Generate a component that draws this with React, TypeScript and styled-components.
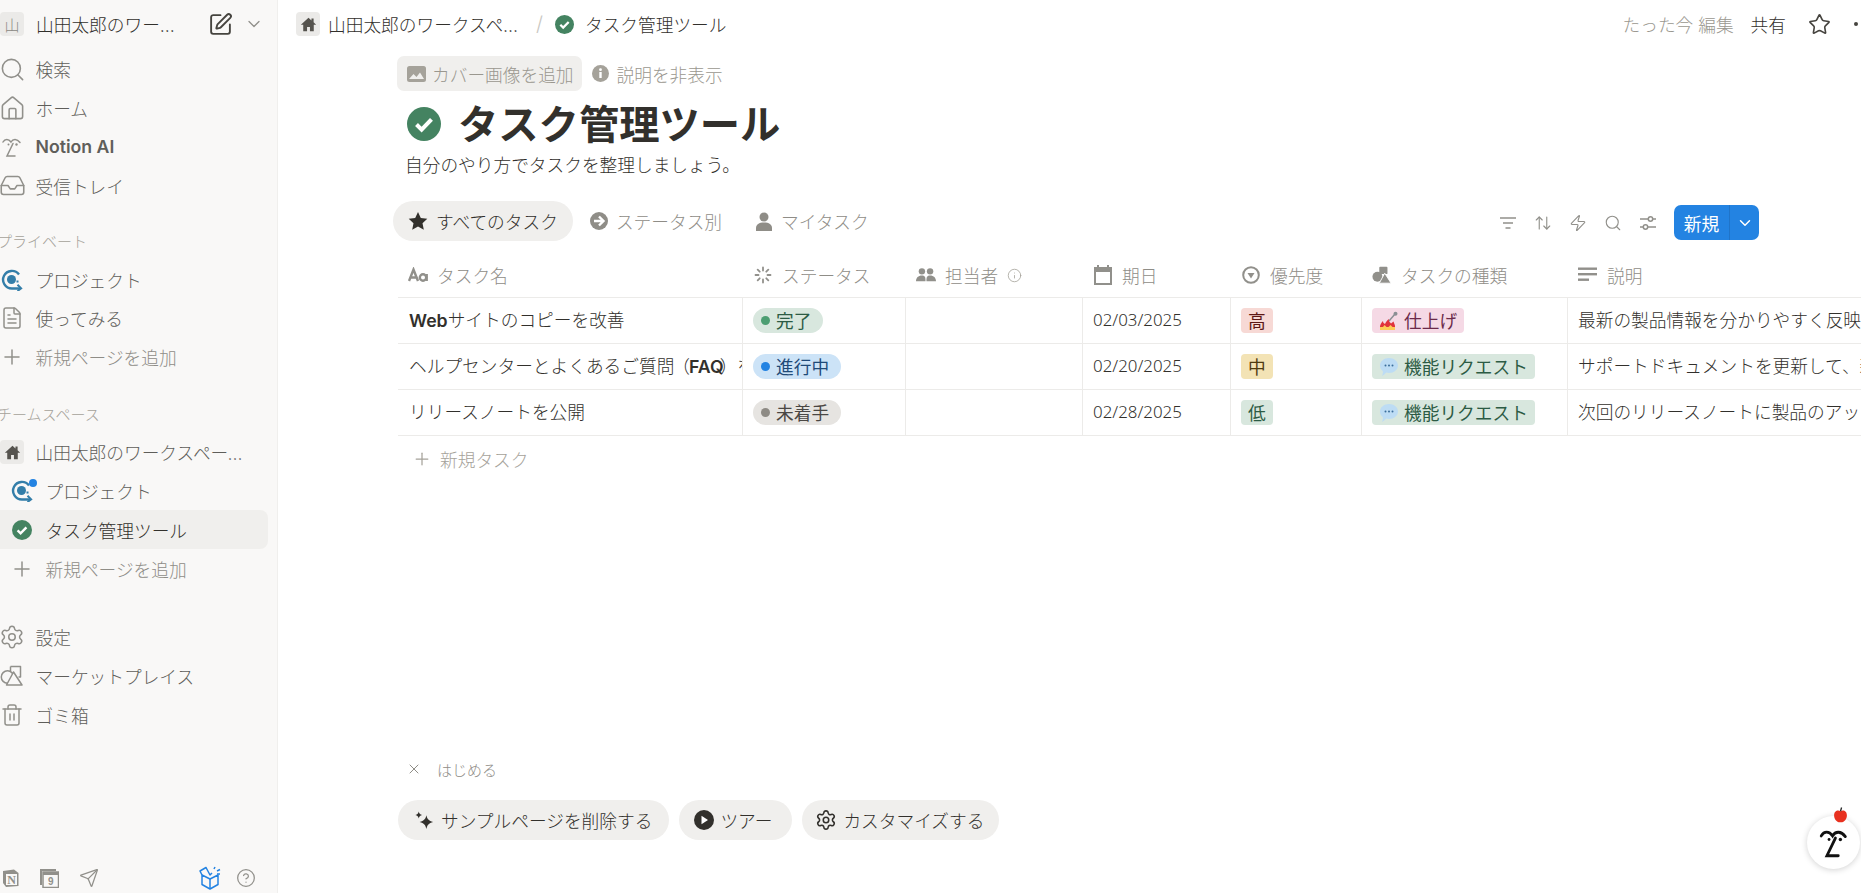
import React from "react";
import styled, { createGlobalStyle } from "styled-components";
import { Search, House, Inbox, FileText, Plus, Settings, Trash2, SquarePen, ChevronDown, Star, X, Info, CircleHelp, Send, ArrowUpDown, Zap } from "lucide-react";

const Global = createGlobalStyle`
  html, body { margin: 0; padding: 0; background: #fff; }
  body { font-family: "Inter", "Noto Sans CJK JP", "Noto Sans", sans-serif; font-size: 17.7px; font-weight: 300; color: #32302c; }
`;

const Page = styled.div`display: flex; width: 1861px; height: 893px; overflow: hidden;`;
const Sidebar = styled.aside`
  width: 277px; flex: none; height: 893px; background: #f9f8f7; border-right: 1px solid #f0efed;
  display: flex; flex-direction: column; overflow: hidden;
`;
const WorkspaceHead = styled.div`height: 50px; flex: none; display: flex; align-items: center;`;
const WsAvatar = styled.div`
  width: 24px; height: 24px; border-radius: 4px; background: #ebeae8; color: #8a8883; font-size: 15px;
  display: flex; align-items: center; justify-content: center; flex: none; margin-top: -2px;
`;
const WsName = styled.div`
  width: 141px; margin-left: 12px; margin-top: -2px; white-space: nowrap; overflow: hidden; text-overflow: ellipsis; color: #32302c; flex: none;
`;
const WsActions = styled.div`display: flex; align-items: center; gap: 11px; margin-left: 31px; margin-top: -2px; color: #32302c;`;
const NavRow = styled.div<{ $indent?: boolean; $active?: boolean; $muted?: boolean; $bold?: boolean }>`
  height: 38.75px; flex: none; display: flex; align-items: center; box-sizing: border-box;
  padding-left: ${(p) => (p.$indent ? "10px" : "0")}; width: ${(p) => (p.$active ? "268px" : "100%")};
  border-radius: 0 8px 8px 0;
  background: ${(p) => (p.$active ? "#f0efed" : "transparent")};
  color: ${(p) => (p.$active ? "#32302c" : p.$muted ? "#8f8d87" : "#5f5e5a")};
  font-weight: ${(p) => (p.$bold ? 600 : 300)};
`;
const NavIcon = styled.span`
  width: 24px; height: 24px; flex: none; display: flex; align-items: center; justify-content: center; color: #91908b; position: relative;
  & > svg { flex: none; }
`;
const NavText = styled.span`margin-left: 11.5px; white-space: nowrap; overflow: hidden; text-overflow: ellipsis;`;
const NavTextClamped = styled(NavText)`width: 208px; flex: none;`;
const SectionLabel = styled.div`
  height: 38.75px; flex: none; display: flex; align-items: center; margin-left: -3px; font-size: 15px; color: #a5a29a; white-space: nowrap;
`;
const SectionGap = styled.div<{ $h: number }>`height: ${(p) => p.$h}px; flex: none;`;
const HomeBox = styled.span`
  width: 24px; height: 24px; border-radius: 4px; background: #ebeae8; display: flex; align-items: center; justify-content: center; color: #55534e; flex: none;
`;
const BlueDot = styled.span`
  position: absolute; right: -3px; top: 0px; width: 8px; height: 8px; border-radius: 50%; background: #2383e2;
`;
const SideFoot = styled.div`margin-top: auto; height: 30px; display: flex; align-items: center; padding-left: 2px;`;
const FootGroup = styled.div`display: flex; align-items: center; gap: 20px; color: #91908b;`;
const FootRight = styled.div`display: flex; align-items: center; gap: 15px; margin-left: auto; margin-right: 21px; color: #91908b;`;

const Main = styled.main`flex: 1; min-width: 0; height: 893px; display: flex; flex-direction: column; overflow: hidden;`;
const TopBar = styled.header`height: 48px; flex: none; display: flex; align-items: center; padding-left: 18px;`;
const CrumbText = styled.span`white-space: nowrap; color: #32302c;`;
const CrumbName = styled(CrumbText)`width: 191px; margin-left: 8px; overflow: hidden; text-overflow: ellipsis; flex: none;`;
const CrumbLeaf = styled(CrumbText)`margin-left: 11px;`;
const Slash = styled.span`color: #c9c7c2; margin: 0 12px 0 17px; font-size: 20px; font-weight: 300;`;
const TopRight = styled.div`margin-left: auto; display: flex; align-items: center; flex: none;`;
const Edited = styled.span`color: #9a978f; white-space: nowrap; margin-right: 17px;`;
const Share = styled.span`color: #32302c; margin-right: 22px;`;
const StarBtn = styled.span`display: flex; color: #46443f; margin-right: 19px;`;

const Content = styled.div`flex: 1; display: flex; flex-direction: column; padding-left: 119px; min-height: 0;`;
const HintRow = styled.div`display: flex; align-items: center; margin-top: 8px; height: 35px; flex: none; color: #9a978f;`;
const HintButton = styled.div<{ $bg?: boolean }>`
  height: 35px; display: flex; align-items: center; gap: ${(p) => (p.$bg ? "6px" : "8px")}; padding: 0 8px 0 ${(p) => (p.$bg ? "10px" : "0")}; border-radius: 7px;
  background: ${(p) => (p.$bg ? "#f0efed" : "transparent")}; white-space: nowrap; margin-right: 10px; box-sizing: border-box;
`;
const TitleRow = styled.div`display: flex; align-items: center; height: 48px; margin-top: 9px; padding-left: 10px; flex: none;`;
const Title = styled.h1`margin: 0 0 0 17px; padding-top: 1px; font-size: 40.3px; font-weight: 700; line-height: 48px; color: #32302c; white-space: nowrap;`;
const Subtitle = styled.div`margin: 5px 0 0 8px; height: 26px; line-height: 26px; color: #32302c; flex: none; white-space: nowrap;`;
const ViewBar = styled.div`display: flex; align-items: center; margin: 22px 102px 0 -4px; height: 40px; flex: none;`;
const Tab = styled.div<{ $active?: boolean }>`
  height: 40px; display: flex; align-items: center; gap: 8px; padding: 0 ${(p) => (p.$active ? "15px" : "13px")} 0 15px; border-radius: 20px; white-space: nowrap; box-sizing: border-box;
  background: ${(p) => (p.$active ? "#f0efed" : "transparent")}; color: ${(p) => (p.$active ? "#32302c" : "#8f8d87")};
  margin-right: ${(p) => (p.$active ? "2px" : "5px")};
`;
const ViewTools = styled.div`margin-left: auto; margin-top: 3px; display: flex; align-items: center; gap: 17px; color: #91908b;`;
const NewButton = styled.div`
  display: flex; height: 35px; border-radius: 7px; overflow: hidden; background: #2383e2; color: #fff; flex: none; font-weight: 400;
`;
const NewLabel = styled.span`width: 55px; display: flex; align-items: center; justify-content: center; border-right: 1px solid #1f74c9;`;
const NewCaret = styled.span`width: 29px; display: flex; align-items: center; justify-content: center;`;

const Table = styled.div`margin: 12px 0 0 1px; flex: none;`;
const COLS = "345px 163px 177px 148px 131px 206px 1fr";
const HeadRow = styled.div`display: grid; grid-template-columns: ${COLS}; height: 45px; border-bottom: 1px solid #ecebe9; box-sizing: border-box; color: #8f8d87;`;
const HeadCell = styled.div`display: flex; align-items: center; gap: 9px; padding-left: 10px; white-space: nowrap; overflow: hidden;`;
const HeadIcon = styled.span`display: flex; width: 20px; flex: none; justify-content: center; color: #91908b;`;
const BodyRow = styled.div`display: grid; grid-template-columns: ${COLS}; height: 46px; border-bottom: 1px solid #ecebe9; box-sizing: border-box;`;
const Cell = styled.div<{ $last?: boolean }>`
  display: flex; align-items: center; padding: 0 0 3px 10px; white-space: nowrap; overflow: hidden; color: #32302c;
  border-right: ${(p) => (p.$last ? "none" : "1px solid #ecebe9")}; box-sizing: border-box; min-width: 0;
`;
const NameCell = styled(Cell)`padding-left: 11px;`;
const NameText = styled.span`white-space: nowrap;`;
const Latin = styled.span`font-weight: 600;`;
const Paren = styled.span`margin-left: -2px;`;
const FaqLatin = styled(Latin)`margin: 0 -4px 0 -1px;`;
const DateText = styled.span`font-family: "Noto Sans", sans-serif; font-size: 16.9px; font-weight: 300;`;
const Pill = styled.span<{ $bg: string; $fg: string; $round?: boolean }>`
  display: inline-flex; align-items: center; gap: ${(p) => (p.$round ? "6px" : "5px")}; height: 25px; padding: ${(p) => (p.$round ? "0 12px 2px 8px" : "0 7px 2px")}; box-sizing: border-box; margin-top: 3px;
  background: ${(p) => p.$bg}; color: ${(p) => p.$fg}; border-radius: ${(p) => (p.$round ? "13px" : "4px")}; flex: none; white-space: nowrap; font-weight: 400;
`;
const Dot = styled.span<{ $c: string }>`width: 9px; height: 9px; border-radius: 50%; background: ${(p) => p.$c}; flex: none; margin-top: 2px;`;
const NewRow = styled.div`display: flex; align-items: center; gap: 8px; height: 46px; padding-left: 14px; color: #a5a29a;`;

const Starter = styled.div`margin-top: auto; padding-bottom: 53px; flex: none;`;
const StarterHead = styled.div`display: flex; align-items: center; gap: 15px; padding-left: 9px; font-size: 15px; color: #8f8d87; height: 20px; margin-bottom: 21px;`;
const StarterRow = styled.div`display: flex; gap: 10px; margin-left: 1px;`;
const StarterPill = styled.div<{ $l?: number; $r?: number }>`
  height: 40px; border-radius: 20px; background: #f0efed; display: flex; align-items: center; gap: 6px; padding: 0 ${(p) => p.$r ?? 17}px 0 ${(p) => p.$l ?? 15}px; color: #32302c; white-space: nowrap; box-sizing: border-box;
`;
const Floating = styled.div`
  position: absolute; left: 1807px; top: 816px; width: 53px; height: 53px; border-radius: 50%; background: #fff;
  box-shadow: 0 1px 6px rgba(0,0,0,.18); display: flex; align-items: center; justify-content: center;
`;
const Apple = styled.svg`position: absolute; left: 26px; top: -9px;`;
const Root = styled.div`position: relative; width: 1861px; height: 893px;`;

const CheckBadge = ({ s = 20 }: { s?: number }) => (
  <svg width={s} height={s} viewBox="0 0 20 20" style={{ flex: "none" }}>
    <circle cx="10" cy="10" r="10" fill="#448361" />
    <path d="M5.6 10.3l3 3 5.8-6" fill="none" stroke="#fff" strokeWidth="2.4" />
  </svg>
);
const HomeSolid = ({ s = 17, c = "currentColor" }: { s?: number; c?: string }) => (
  <svg width={s} height={s} viewBox="0 0 20 20"><path fill={c} d="M10 2L1 10.2h2.8V18h4.5v-5.2h3.4V18h4.5v-7.8H19l-3-2.8V3h-2.5v2.2z" /></svg>
);
const ProjectIcon = () => (
  <svg width="22" height="22" viewBox="0 0 22 22" fill="none">
    <path d="M18 5.500A8.800 8.800 0 1 0 11 19.500h8" stroke="#337ea9" strokeWidth="2.400" />
    <path d="M16.500 15.800l3.600 3.600-3.600 2.600" stroke="#337ea9" strokeWidth="2" />
    <circle cx="10.500" cy="10.500" r="4.500" fill="#337ea9" />
    <path d="M15.500 12.500h4" stroke="#337ea9" strokeWidth="2" strokeDasharray="2 2" />
  </svg>
);
const Face = ({ s = 24, c = "#91908b", w = 1.5 }: { s?: number; c?: string; w?: number }) => (
  <svg width={s} height={s} viewBox="0 0 24 24" fill="none" stroke={c} strokeWidth={w} strokeLinecap="round">
    <path d="M3 7c2-3.500 5.500-3.500 8 0 2-3.500 6-3.500 9 .5" />
    <path d="M13 8.500L7 21h8" />
    <circle cx="8.500" cy="9.500" r="1" fill={c} stroke="none" />
    <circle cx="16.500" cy="9.500" r="1.200" fill={c} stroke="none" />
  </svg>
);
const ShapesOutline = () => (
  <svg width="24" height="24" viewBox="0 0 24 24" fill="none" stroke="#91908b" strokeWidth="1.500" strokeLinejoin="round">
    <circle cx="7.500" cy="13" r="6.200" />
    <path d="M10.500 2.500h10v10.500h-2" />
    <path d="M13.500 8l8.500 13H6.500z" fill="#f9f8f7" />
    <path d="M10.500 2.500v5" />
  </svg>
);
const Spinner = () => (
  <svg width="18" height="18" viewBox="0 0 18 18" stroke="#91908b" strokeWidth="1.800" strokeLinecap="round">
    <path d="M9 1.500v3M9 13.500v3M1.500 9h3M13.500 9h3M3.700 3.700l2 2M12.300 12.300l2 2M3.700 14.300l2-2M12.300 5.700l2-2" />
  </svg>
);
const AaIcon = () => (
  <svg width="20" height="16" viewBox="0 0 20 16" fill="none" stroke="#91908b" strokeWidth="2.400">
    <path d="M1 14L5.500 2.500 10 14M2.500 10.500h6" />
    <circle cx="15" cy="10.500" r="3.200" /><path d="M18.700 7v7" />
  </svg>
);
const People = () => (
  <svg width="22" height="16" viewBox="0 0 22 16" fill="#91908b">
    <circle cx="6.500" cy="4" r="3.500" /><circle cx="15.500" cy="4" r="3.500" />
    <path d="M0 15c0-4 2.500-6.500 6.500-6.500S10.500 11 10.500 15zM11.500 15c0-4 0-6.500 4-6.500S22 11 22 15z" />
  </svg>
);
const Calendar = () => (
  <svg width="18" height="20" viewBox="0 0 18 20"><path fill="#91908b" fillRule="evenodd" d="M3 0h2v2h8V0h2v2h3v18H0V2h3zM2 7v11h14V7z" /></svg>
);
const PriorityIcon = () => (
  <svg width="18" height="18" viewBox="0 0 18 18" fill="none"><circle cx="9" cy="9" r="7.800" stroke="#91908b" strokeWidth="2" /><path d="M5.500 7h7L9 12.500z" fill="#91908b" /></svg>
);
const ShapesSolid = () => (
  <svg width="22" height="20" viewBox="0 0 22 20" fill="#91908b"><circle cx="6" cy="12" r="5.500" /><rect x="8" y="1" width="9" height="8" rx="1" /><path d="M14 8l7 11H8z" stroke="#fff" strokeWidth="1" /></svg>
);
const LinesIcon = () => (
  <svg width="20" height="16" viewBox="0 0 20 16" fill="#91908b"><rect width="19" height="2.400" y="0.500" /><rect width="19" height="2.400" y="6" /><rect width="11" height="2.400" y="11.500" /></svg>
);
const ImageIcon = () => (
  <svg width="19" height="16" viewBox="0 0 19 16"><rect width="19" height="16" rx="2.500" fill="#a5a29a" /><path d="M2 13l4.500-5 3 3 3.500-4.500 4 6.500z" fill="#f0efed" /></svg>
);
const SolidInfo = () => (
  <svg width="17" height="17" viewBox="0 0 17 17"><circle cx="8.500" cy="8.500" r="8.500" fill="#a5a29a" /><rect x="7.300" y="7" width="2.400" height="6" fill="#fff" /><circle cx="8.500" cy="4.700" r="1.400" fill="#fff" /></svg>
);
const SolidStar = () => (
  <svg width="20" height="20" viewBox="0 0 20 20"><path fill="#32302c" d="M10 1l2.800 6 6.500.8-4.800 4.400 1.300 6.500L10 15.400l-5.800 3.300 1.300-6.500L.7 7.800 7.200 7z" /></svg>
);
const ArrowCircle = () => (
  <svg width="18" height="18" viewBox="0 0 18 18"><circle cx="9" cy="9" r="9" fill="#8f8d87" /><path d="M4 9h9M9 4.500L13.500 9 9 13.500" fill="none" stroke="#fff" strokeWidth="2.400" /></svg>
);
const Person = () => (
  <svg width="18" height="19" viewBox="0 0 18 19" fill="#8f8d87"><circle cx="9" cy="5" r="4.500" /><path d="M1 19v-3c0-3.500 3-5.500 8-5.500s8 2 8 5.500v3z" /></svg>
);
const FilterLines = () => (
  <svg width="18" height="16" viewBox="0 0 18 16" stroke="#91908b" strokeWidth="1.500"><path d="M1 3h16M4 8h10M6.500 13h5" /></svg>
);
const Sliders = () => (
  <svg width="18" height="16" viewBox="0 0 18 16" fill="none" stroke="#91908b" strokeWidth="1.500">
    <path d="M1 4h8M14 4h3M1 12h3M9 12h8" /><circle cx="11.500" cy="4" r="2.200" /><circle cx="6.500" cy="12" r="2.200" />
  </svg>
);
const Fire = () => (
  <svg width="20" height="20" viewBox="0 0 20 20" style={{ flex: "none", marginTop: 2 }}>
    <path d="M10 10L16 3" stroke="#8a8f94" strokeWidth="1.500" />
    <circle cx="16.500" cy="2.800" r="2" fill="#8a8f94" />
    <path d="M1 19v-4c1-3 2-4 3-5 0 2 1 2 2 3 1-2 2-4 4-5-.5 3 1 3 2 4.500 1-1 1.500-1 2.500-2 .5 2 1.500 3 1.500 4.500v4z" fill="#e0323c" />
    <path d="M1 19v-3h3l1.500-2 2 2h2l2-2 2 2h2.500v3z" fill="#fdcb58" />
  </svg>
);
const Bubble = () => (
  <svg width="20" height="20" viewBox="0 0 20 20" style={{ flex: "none", marginTop: 2 }}>
    <path d="M10 1c5 0 9 3.300 9 7.500S15 16 10 16c-1 0-2-.1-2.800-.4C6 17 4.500 18.500 3 19c.6-1.200 1-3 .9-4.800C2 12.800 1 10.800 1 8.500 1 4.300 5 1 10 1z" fill="#bddcf4" />
    <circle cx="6.500" cy="8.500" r="1" fill="#3b6e9c" /><circle cx="10" cy="8.500" r="1" fill="#3b6e9c" /><circle cx="13.500" cy="8.500" r="1" fill="#3b6e9c" />
  </svg>
);
const Sparkles = () => (
  <svg width="22" height="23" viewBox="0 0 23 23" fill="#32302c" style={{ flex: "none" }}>
    <path d="M14 6c.8 4 2.500 5.800 7 7-4.500 1.200-6.200 3-7 7.500-.8-4.500-2.500-6.300-7-7.500 4.500-1.200 6.200-3 7-7z" />
    <path d="M6 2c.4 2.200 1.300 3.100 3.500 3.700C7.300 6.300 6.400 7.200 6 9.500 5.600 7.200 4.700 6.300 2.500 5.700 4.700 5.100 5.600 4.200 6 2z" />
  </svg>
);
const Play = () => (
  <svg width="20" height="20" viewBox="0 0 20 20" style={{ flex: "none" }}><circle cx="10" cy="10" r="10" fill="#32302c" /><path d="M7.500 5.800l6.500 4.200-6.500 4.200z" fill="#fff" /></svg>
);
const NotionMark = () => (
  <svg width="17" height="18" viewBox="0 0 17 18"><path d="M1 2l11-1.500L16.500 4v13L4 18 1 14z" fill="#91908b" /><path d="M4 5h11v11H4z" fill="#f9f8f7" /><text x="9.500" y="14.500" fontSize="12" fontWeight="700" fontFamily="Liberation Serif" textAnchor="middle" fill="#91908b">N</text></svg>
);
const CalendarMark = () => (
  <svg width="20" height="20" viewBox="0 0 20 20"><path d="M1 1h16v2H3v14H1z" fill="#91908b" /><rect x="4" y="4" width="15.500" height="15.500" fill="none" stroke="#91908b" strokeWidth="1.500" /><rect x="4" y="4" width="15.500" height="3" fill="#91908b" /><text x="11.800" y="17" fontSize="10" fontWeight="700" fontFamily="Liberation Sans" textAnchor="middle" fill="#91908b">9</text></svg>
);
const GiftBox = () => (
  <svg width="22" height="24" viewBox="0 0 22 24" fill="none" stroke="#2383e2" strokeWidth="1.500" strokeLinejoin="round">
    <path d="M11 13L3 9v9.500L11 23l8-4.500V9z" /><path d="M11 13v10M3 9l-2-4 6-3.500 4 7.500 2-2" /><path d="M15 3l1-2M18 5l3-1.500M18 8h3" />
  </svg>
);
const StatusPill = ({ bg, fg, dot, t }: { bg: string; fg: string; dot: string; t: string }) => (
  <Pill $round $bg={bg} $fg={fg}><Dot $c={dot} />{t}</Pill>
);
const GREEN = { bg: "#d8e7de", fg: "#2c5b44" };

const rows = [
  {
    name: <NameText><Latin>Web</Latin>サイトのコピーを改善</NameText>, st: <StatusPill bg="#d8e7de" fg="#2c5b44" dot="#4c9e72" t="完了" />, date: "02/03/2025",
    pr: <Pill $bg="#f7d9d5" $fg="#5d1715">高</Pill>, ty: <Pill $bg="#f5d9e5" $fg="#6b2a4a"><Fire />仕上げ</Pill>, desc: "最新の製品情報を分かりやすく反映するためにウェブサイトの内容を更新します",
  },
  {
    name: <NameText>ヘルプセンターとよくあるご質問<Paren>（</Paren><FaqLatin>FAQ</FaqLatin>）を更新する</NameText>, st: <StatusPill bg="#cce3f7" fg="#1f4a78" dot="#2383e2" t="進行中" />, date: "02/20/2025",
    pr: <Pill $bg="#f3e3b5" $fg="#4f3b10">中</Pill>, ty: <Pill $bg={GREEN.bg} $fg={GREEN.fg}><Bubble />機能リクエスト</Pill>, desc: "サポートドキュメントを更新して、新機能についての説明を追加します",
  },
  {
    name: <NameText>リリースノートを公開</NameText>, st: <StatusPill bg="#e6e4e1" fg="#4a4744" dot="#8e8b85" t="未着手" />, date: "02/28/2025",
    pr: <Pill $bg={GREEN.bg} $fg={GREEN.fg}>低</Pill>, ty: <Pill $bg={GREEN.bg} $fg={GREEN.fg}><Bubble />機能リクエスト</Pill>, desc: "次回のリリースノートに製品のアップデート内容をまとめて公開します",
  },
];

export default function App() {
  return (
    <Root>
      <Global />
      <Page>
        <Sidebar>
          <WorkspaceHead>
            <WsAvatar>山</WsAvatar>
            <WsName>山田太郎のワークスペース</WsName>
            <WsActions>
              <SquarePen size={25} strokeWidth={1.800} color="#46443f" />
              <ChevronDown size={20} strokeWidth={1.500} color="#91908b" />
            </WsActions>
          </WorkspaceHead>
          <NavRow><NavIcon><Search size={27} strokeWidth={1.400} /></NavIcon><NavText>検索</NavText></NavRow>
          <NavRow><NavIcon><House size={27} strokeWidth={1.400} /></NavIcon><NavText>ホーム</NavText></NavRow>
          <NavRow $bold><NavIcon><Face /></NavIcon><NavText>Notion AI</NavText></NavRow>
          <NavRow><NavIcon><Inbox size={27} strokeWidth={1.400} /></NavIcon><NavText>受信トレイ</NavText></NavRow>
          <SectionGap $h={16.500} />
          <SectionLabel>プライベート</SectionLabel>
          <NavRow><NavIcon><ProjectIcon /></NavIcon><NavText>プロジェクト</NavText></NavRow>
          <NavRow><NavIcon><FileText size={24} strokeWidth={1.500} /></NavIcon><NavText>使ってみる</NavText></NavRow>
          <NavRow $muted><NavIcon><Plus size={24} strokeWidth={1.500} /></NavIcon><NavText>新規ページを追加</NavText></NavRow>
          <SectionGap $h={17.700} />
          <SectionLabel>チームスペース</SectionLabel>
          <NavRow><HomeBox><HomeSolid /></HomeBox><NavTextClamped>山田太郎のワークスペース</NavTextClamped></NavRow>
          <NavRow $indent><NavIcon><ProjectIcon /><BlueDot /></NavIcon><NavText>プロジェクト</NavText></NavRow>
          <NavRow $indent $active><NavIcon><CheckBadge /></NavIcon><NavText>タスク管理ツール</NavText></NavRow>
          <NavRow $indent $muted><NavIcon><Plus size={24} strokeWidth={1.500} /></NavIcon><NavText>新規ページを追加</NavText></NavRow>
          <SectionGap $h={30} />
          <NavRow><NavIcon><Settings size={26} strokeWidth={1.400} /></NavIcon><NavText>設定</NavText></NavRow>
          <NavRow><NavIcon><ShapesOutline /></NavIcon><NavText>マーケットプレイス</NavText></NavRow>
          <NavRow><NavIcon><Trash2 size={24} strokeWidth={1.500} /></NavIcon><NavText>ゴミ箱</NavText></NavRow>
          <SideFoot>
            <FootGroup><NotionMark /><CalendarMark /><Send size={20} strokeWidth={1.500} /></FootGroup>
            <FootRight><GiftBox /><CircleHelp size={20} strokeWidth={1.500} /></FootRight>
          </SideFoot>
        </Sidebar>
        <Main>
          <TopBar>
            <HomeBox><HomeSolid /></HomeBox>
            <CrumbName>山田太郎のワークスペース</CrumbName>
            <Slash>/</Slash>
            <CheckBadge s={19} />
            <CrumbLeaf>タスク管理ツール</CrumbLeaf>
            <TopRight>
              <Edited>たった今 編集</Edited>
              <Share>共有</Share>
              <StarBtn><Star size={23} strokeWidth={1.700} /></StarBtn>
              <svg width="11" height="6" viewBox="0 0 11 6"><circle cx="6" cy="3" r="2" fill="#46443f" /></svg>
            </TopRight>
          </TopBar>
          <Content>
            <HintRow>
              <HintButton $bg><ImageIcon />カバー画像を追加</HintButton>
              <HintButton><SolidInfo />説明を非表示</HintButton>
            </HintRow>
            <TitleRow><CheckBadge s={34} /><Title>タスク管理ツール</Title></TitleRow>
            <Subtitle>自分のやり方でタスクを整理しましょう。</Subtitle>
            <ViewBar>
              <Tab $active><SolidStar />すべてのタスク</Tab>
              <Tab><ArrowCircle />ステータス別</Tab>
              <Tab><Person />マイタスク</Tab>
              <ViewTools>
                <FilterLines />
                <ArrowUpDown size={18} strokeWidth={1.500} />
                <Zap size={18} strokeWidth={1.500} />
                <Search size={18} strokeWidth={1.500} />
                <Sliders />
                <NewButton>
                  <NewLabel>新規</NewLabel>
                  <NewCaret><ChevronDown size={18} strokeWidth={2} /></NewCaret>
                </NewButton>
              </ViewTools>
            </ViewBar>
            <Table>
              <HeadRow>
                <HeadCell><HeadIcon><AaIcon /></HeadIcon>タスク名</HeadCell>
                <HeadCell><HeadIcon><Spinner /></HeadIcon>ステータス</HeadCell>
                <HeadCell><HeadIcon><People /></HeadIcon>担当者<Info size={15} strokeWidth={1.300} color="#a5a29a" /></HeadCell>
                <HeadCell><HeadIcon><Calendar /></HeadIcon>期日</HeadCell>
                <HeadCell><HeadIcon><PriorityIcon /></HeadIcon>優先度</HeadCell>
                <HeadCell><HeadIcon><ShapesSolid /></HeadIcon>タスクの種類</HeadCell>
                <HeadCell><HeadIcon><LinesIcon /></HeadIcon>説明</HeadCell>
              </HeadRow>
              {rows.map((r, i) => (
                <BodyRow key={i}>
                  <NameCell>{r.name}</NameCell>
                  <Cell>{r.st}</Cell>
                  <Cell />
                  <Cell><DateText>{r.date}</DateText></Cell>
                  <Cell>{r.pr}</Cell>
                  <Cell>{r.ty}</Cell>
                  <Cell $last>{r.desc}</Cell>
                </BodyRow>
              ))}
              <NewRow><Plus size={20} strokeWidth={1.500} />新規タスク</NewRow>
            </Table>
            <Starter>
              <StarterHead><X size={16} strokeWidth={1.500} />はじめる</StarterHead>
              <StarterRow>
                <StarterPill><Sparkles />サンプルページを削除する</StarterPill>
                <StarterPill $r={20}><Play />ツアー</StarterPill>
                <StarterPill $l={13} $r={15}><Settings size={22} strokeWidth={1.700} />カスタマイズする</StarterPill>
              </StarterRow>
            </Starter>
          </Content>
        </Main>
      </Page>
      <Floating>
        <Face s={34} c="#111" w={2} />
        <Apple width="15" height="16" viewBox="0 0 14 15">
          <path d="M7 4c2-1.500 6-1 6 4 0 3.500-3 7-6 6.300C4 15 1 11.500 1 8c0-5 4-5.500 6-4z" fill="#e8311f" />
          <path d="M7 4l1-3.500" stroke="#222" strokeWidth="1.200" fill="none" />
        </Apple>
      </Floating>
    </Root>
  );
}
